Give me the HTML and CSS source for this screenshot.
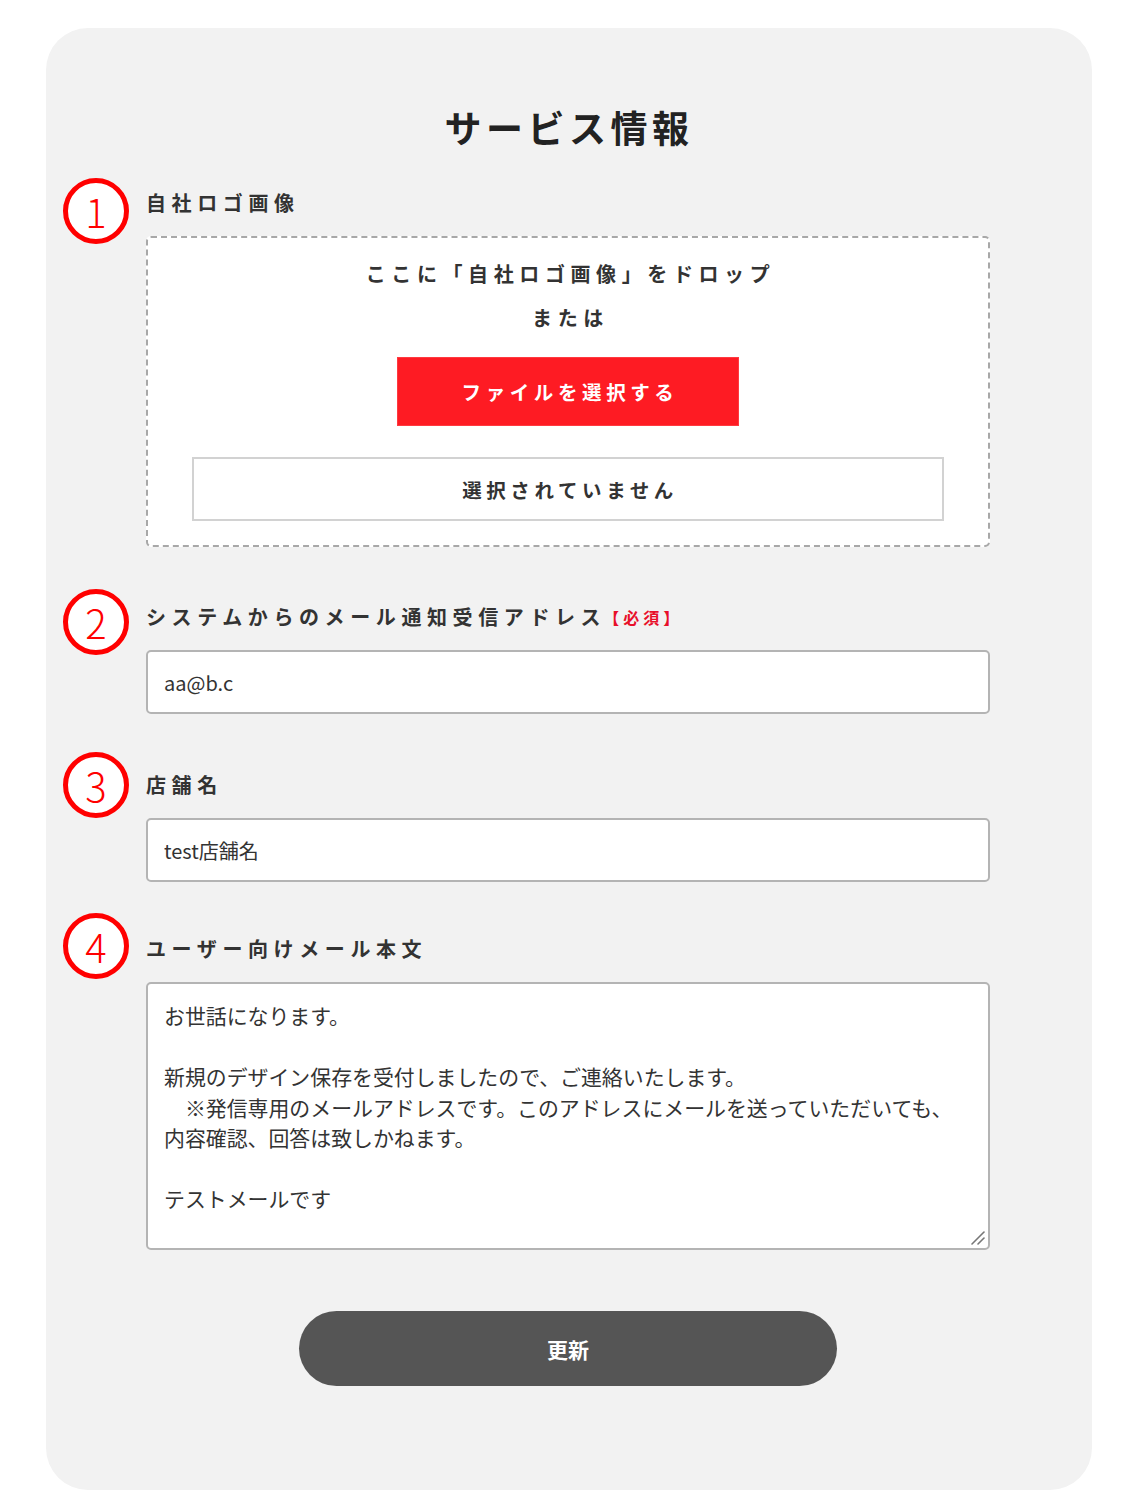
FILE: index.html
```html
<!DOCTYPE html>
<html lang="ja">
<head>
<meta charset="utf-8">
<title>サービス情報</title>
<link rel="stylesheet" href="styles.css">
</head>
<body>
<main class="card">
  <h1 class="title">サービス情報</h1>

  <section class="field field-first">
    <span class="marker marker-1">1</span>
    <div class="label">自社ロゴ画像</div>
    <div class="dropzone">
      <p class="drop-text">ここに「自社ロゴ画像」をドロップ</p>
      <p class="drop-text">または</p>
      <button type="button" class="file-btn">ファイルを選択する</button>
      <div class="file-name">選択されていません</div>
    </div>
  </section>

  <section class="field field-2">
    <span class="marker marker-2">2</span>
    <div class="label">システムからのメール通知受信アドレス<span class="required">【必須】</span></div>
    <input class="text-input" type="text" value="aa@b.c">
  </section>

  <section class="field field-3">
    <span class="marker marker-3">3</span>
    <div class="label">店舗名</div>
    <input class="text-input" type="text" value="test店舗名">
  </section>

  <section class="field field-4">
    <span class="marker marker-4">4</span>
    <div class="label">ユーザー向けメール本文</div>
    <div class="textarea-wrap">
      <textarea class="text-area">お世話になります。

新規のデザイン保存を受付しましたので、ご連絡いたします。
　※発信専用のメールアドレスです。このアドレスにメールを送っていただいても、
内容確認、回答は致しかねます。

テストメールです</textarea>
      <svg class="grip" width="16" height="16" viewBox="0 0 16 16" aria-hidden="true">
        <line x1="2" y1="14" x2="14" y2="2" stroke="#777" stroke-width="1.6" stroke-linecap="round"/>
        <line x1="8" y1="14" x2="14" y2="8" stroke="#777" stroke-width="1.6" stroke-linecap="round"/>
      </svg>
    </div>
  </section>

  <div class="actions">
    <button type="button" class="submit-btn">更新</button>
  </div>
</main>
</body>
</html>
```

FILE: styles.css
```css
* { box-sizing: border-box; }

html, body {
  margin: 0;
  padding: 0;
  background: #ffffff;
}

body {
  font-family: "Noto Sans CJK JP", "Noto Sans", sans-serif;
  color: #333333;
  padding: 28px 0 0 46px;
}

.card {
  width: 1046px;
  height: 1462px;
  background: #f2f2f2;
  border-radius: 42px;
  padding: 74px 102px 0 100px;
}

.title {
  margin: 0;
  text-align: center;
  font-size: 37px;
  line-height: 50px;
  font-weight: 700;
  letter-spacing: 4.5px;
  color: #222222;
  padding-left: 2px;
}

.field {
  position: relative;
}

.field-first { margin-top: 36px; }
.field-2 { margin-top: 55px; }
.field-3 { margin-top: 56px; }
.field-4 { margin-top: 52px; }

.marker {
  position: absolute;
  left: -83px;
  width: 66px;
  height: 66px;
  border: 5px solid #ff0000;
  border-radius: 50%;
  display: flex;
  align-items: center;
  justify-content: center;
  color: #ff0000;
  font-family: "Noto Sans CJK JP", sans-serif;
  font-weight: 300;
  font-size: 40px;
  line-height: 1;
  background: #ffffff;
}

.marker-1 { top: -10px; }
.marker-2 { top: -13px; }
.marker-3 { top: -18px; }
.marker-4 { top: -21px; }

.label {
  font-size: 20px;
  line-height: 30px;
  font-weight: 700;
  letter-spacing: 5.6px;
  color: #333333;
  margin-bottom: 18px;
  display: flex;
  align-items: center;
}

.required {
  color: #e8102a;
  font-size: 16px;
  letter-spacing: 4px;
  margin-left: -3px;
}

.dropzone {
  height: 311px;
  background: #ffffff;
  border: 2px dashed #a8a8a8;
  border-radius: 5px;
  padding: 14px 44px 0 44px;
  display: flex;
  flex-direction: column;
  align-items: center;
}

.drop-text {
  margin: 0;
  font-size: 20px;
  line-height: 44px;
  font-weight: 700;
  letter-spacing: 5.6px;
  color: #333333;
  padding-left: 5px;
}

.file-btn {
  margin-top: 17px;
  width: 342px;
  height: 69px;
  background: #fe1b23;
  border: 1px solid #ff3a40;
  color: #ffffff;
  font-family: inherit;
  font-size: 19.5px;
  font-weight: 700;
  letter-spacing: 4.6px;
  cursor: pointer;
  padding: 0 0 0 4px;
}

.file-name {
  margin-top: 31px;
  width: 752px;
  height: 64px;
  background: #ffffff;
  border: 2px solid #d2d2d2;
  display: flex;
  align-items: center;
  justify-content: center;
  font-size: 19.5px;
  font-weight: 700;
  letter-spacing: 4.6px;
  color: #333333;
  padding-left: 4px;
}

.text-input {
  display: block;
  width: 844px;
  height: 64px;
  border: 2px solid #b4b4b4;
  border-radius: 5px;
  background: #ffffff;
  padding: 0 16px;
  font-family: "Noto Sans CJK JP", sans-serif;
  font-size: 20px;
  color: #333333;
  outline: none;
}

.textarea-wrap {
  position: relative;
  width: 844px;
}

.text-area {
  display: block;
  width: 844px;
  height: 268px;
  border: 2px solid #b4b4b4;
  border-radius: 5px;
  background: #ffffff;
  padding: 16px 16px;
  font-family: "Noto Sans CJK JP", sans-serif;
  font-size: 20.9px;
  line-height: 30.5px;
  color: #333333;
  outline: none;
  resize: none;
  white-space: pre-wrap;
  overflow: hidden;
}

.grip {
  position: absolute;
  right: 4px;
  bottom: 4px;
  pointer-events: none;
}

.actions {
  margin-top: 61px;
  display: flex;
  justify-content: center;
}

.submit-btn {
  width: 538px;
  height: 75px;
  border: none;
  border-radius: 38px;
  background: #555555;
  color: #ffffff;
  font-family: inherit;
  font-size: 21px;
  font-weight: 700;
  letter-spacing: 0;
  cursor: pointer;
}
```
